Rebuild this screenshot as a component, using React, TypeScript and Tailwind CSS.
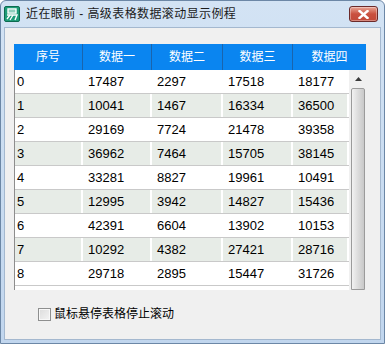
const ROWS: readonly (readonly number[])[] = [
  [0, 17487, 2297, 17518, 18177],
  [1, 10041, 1467, 16334, 36500],
  [2, 29169, 7724, 21478, 39358],
  [3, 36962, 7464, 15705, 38145],
  [4, 33281, 8827, 19961, 10491],
  [5, 12995, 3942, 14827, 15436],
  [6, 42391, 6604, 13902, 10153],
  [7, 10292, 4382, 27421, 28716],
  [8, 29718, 2895, 15447, 31726],
]

const HEADERS = ['序号', '数据一', '数据二', '数据三', '数据四']
const HEAD_WIDTHS = ['w-[69px]', 'w-[69px]', 'w-[71px]', 'w-[70px]', 'flex-1']
const CELL_WIDTHS = ['w-[68px]', 'w-[69px]', 'w-[71px]', 'w-[70px]', 'flex-1']

const FONT = "font-['Liberation_Sans','Noto_Sans_CJK_SC',sans-serif]"

/** Little green app glyph in the caption. */
function AppIcon() {
  return (
    <svg width="16" height="16" viewBox="0 0 16 16" aria-hidden>
      <rect x="0.5" y="0.5" width="15" height="15" rx="1.5" fill="#1f9c78" stroke="#0d6b50" />
      <path d="M4 3h8v4H4z" fill="none" stroke="#fff" strokeWidth="1.4" />
      <path d="M4 5h8" stroke="#fff" strokeWidth="1.2" />
      <path d="M3 9h10l-2 5" fill="none" stroke="#fff" strokeWidth="1.4" />
      <path d="M6 9l-3 4M9 9l-3 5" stroke="#fff" strokeWidth="1.3" />
    </svg>
  )
}

function CloseButton() {
  return (
    <div className="flex h-[16px] w-[29px] items-center justify-center rounded-[3px] border border-[#6b2a2a] bg-gradient-to-b from-[#e8a596] via-[#c9503f] to-[#c24a3a] shadow-[inset_0_0_0_1px_rgba(255,255,255,0.35)]">
      <svg width="11" height="9" viewBox="0 0 11 9" aria-hidden>
        <path d="M1.5 1l8 7M9.5 1l-8 7" stroke="#fff" strokeWidth="2.4" strokeLinecap="square" />
      </svg>
    </div>
  )
}

function ScrollBar() {
  return (
    <div className="flex w-[17px] flex-col bg-[#f0f0f0] pl-[1px]">
      <div className="flex h-[17px] items-center justify-center">
        <svg width="7" height="4" viewBox="0 0 7 4" aria-hidden>
          <path d="M0 4L3.5 0L7 4z" fill="#3a3a3a" />
        </svg>
      </div>
      <div className="mx-[1px] mt-[1px] flex-1 rounded-t-[2px] border border-[#9b9b9b] bg-gradient-to-r from-[#f2f2f2] via-[#dcdcdc] to-[#c9c9c9]" />
    </div>
  )
}

export default function App() {
  return (
    <div className={`flex h-[344px] w-[385px] flex-col overflow-hidden rounded-t-[6px] border border-[#6c87a6] bg-gradient-to-b from-[#d3e3f4] to-[#c1d6ee] ${FONT}`}>
      <div className="flex h-[26px] shrink-0 items-center gap-[6px] pl-[3px] pr-[6px]">
        <AppIcon />
        <span className="flex-1 text-[12px] tracking-[0.4px] text-[#1b1b1b]">近在眼前 - 高级表格数据滚动显示例程</span>
        <CloseButton />
      </div>

      <div className="mx-[3px] mb-[3px] flex flex-1 flex-col border border-[#a4b8cf] bg-[#f0f0f0] pl-[9px] pr-[14px] pt-[16px]">
        <div className="flex h-[26px] bg-[#0a85f0] text-[12px] text-white">
          {HEADERS.map((label, index) => (
            <div
              key={label}
              className={`${HEAD_WIDTHS[index]} flex items-center justify-center ${index < 4 ? 'border-r border-[#1a64ad]' : ''}`}
            >
              {label}
            </div>
          ))}
        </div>

        <div className="flex h-[220px] overflow-hidden border-l border-[#8d8d8d] bg-white">
          <div className="flex flex-1 flex-col overflow-hidden">
            {ROWS.map((row, rowIndex) => (
              <div key={row[0]} className="flex h-[24px] shrink-0 border-b border-[#c9c9c9] text-[13px] text-black">
                {row.map((value, col) => (
                  <div
                    key={col}
                    className={`${CELL_WIDTHS[col]} flex items-center border-r-2 border-white ${col === 0 ? 'pl-[2px]' : 'pl-[5px]'} ${rowIndex % 2 === 1 ? 'bg-[#e7ece7]' : 'bg-white'}`}
                  >
                    {value}
                  </div>
                ))}
              </div>
            ))}
          </div>
          <ScrollBar />
        </div>

        <label className="mt-[15px] flex items-center gap-[3px] pl-[24px] text-[12px] text-black">
          <span className="h-[13px] w-[13px] border border-[#8e8f8f] bg-gradient-to-br from-[#dcdcdc] to-[#f4f4f4] shadow-[inset_0_0_0_1px_#f8f8f8]" />
          鼠标悬停表格停止滚动
        </label>
      </div>
    </div>
  )
}
